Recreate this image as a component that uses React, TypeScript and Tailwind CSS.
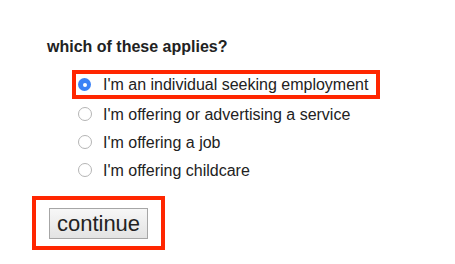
import { useState } from "react";

const options = [
  "I'm an individual seeking employment",
  "I'm offering or advertising a service",
  "I'm offering a job",
  "I'm offering childcare",
];

function Radio({ checked }: { checked: boolean }) {
  if (checked) {
    return (
      <span className="w-[13px] h-[13px] rounded-full bg-[#3b82f6] flex items-center justify-center shrink-0">
        <span className="w-[4px] h-[4px] rounded-full bg-white" />
      </span>
    );
  }
  return (
    <span className="w-[14px] h-[14px] rounded-full border border-[#b5b5b5] bg-white shrink-0" />
  );
}

export default function App() {
  const [selected, setSelected] = useState(0);

  return (
    <div className="w-[455px] h-[264px] bg-white pt-[37px] pl-[32px] font-['Liberation_Sans',Arial,sans-serif] text-[#222]">
      <h2 className="ml-[15px] text-[16px] leading-[20px] font-bold">
        which of these applies?
      </h2>

      <div className="mt-[13px] ml-[40px] flex flex-col items-start">
        {options.map((label, i) => {
          const checked = selected === i;
          const row = (
            <button
              type="button"
              onClick={() => setSelected(i)}
              className={`flex items-center text-[16px] leading-[21px] text-left ${
                checked ? "gap-[12px] pl-[2px]" : "gap-[11px] pl-[2px]"
              }`}
            >
              <Radio checked={checked} />
              <span>{label}</span>
            </button>
          );
          if (i === 0) {
            return (
              <div
                key={label}
                className="border-[4px] border-[#ff2600] w-[308px] h-[29px] mb-[1px] flex items-center"
              >
                {row}
              </div>
            );
          }
          return (
            <div key={label} className="ml-[4px] h-[28px] flex items-center">
              {row}
            </div>
          );
        })}
      </div>

      <div className="mt-[12px] w-[133px] h-[54px] border-[4px] border-[#ff2600] pl-[13px] pt-[8px]">
        <button
          type="button"
          className="w-[99px] h-[31px] border border-[#a6a6a6] bg-gradient-to-b from-[#f7f7f7] to-[#e3e3e3] text-[22px] leading-[29px] text-[#222]"
        >
          continue
        </button>
      </div>
    </div>
  );
}
